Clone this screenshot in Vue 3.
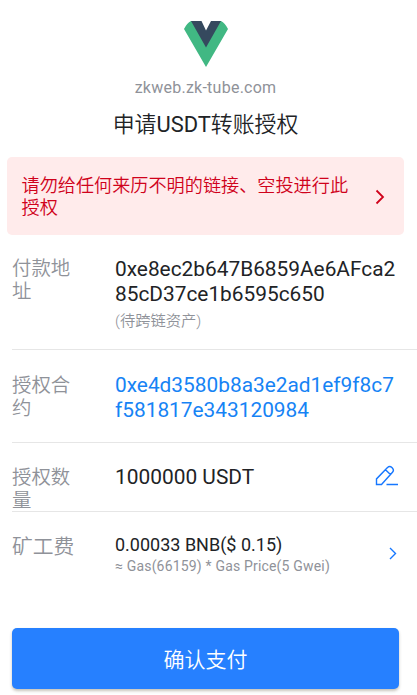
<script setup>
import { ref } from 'vue'

const domain = ref('zkweb.zk-tube.com')
const payer = ['0xe8ec2b647B6859Ae6AFca2', '85cD37ce1b6595c650']
const contract = ['0xe4d3580b8a3e2ad1ef9f8c7', 'f581817e343120984']
const amount = ref('1000000 USDT')
</script>

<template>
  <main class="approve-page">
    <header class="dapp-header">
      <svg class="dapp-logo" width="46" height="48" viewBox="0 0 46 48">
        <path fill="#41b883" d="M8 1H15L23 15L31 1H38Q42 3 45 9L23 47L1 9Q4 3 8 1Z" />
        <path fill="#35495e" d="M8 1H18.500L23 10.500L28 1H38L23 27.500Z" />
      </svg>
      <div class="domain">{{ domain }}</div>
      <h1>申请<span class="token">USDT</span>转账授权</h1>
    </header>

    <div class="warning">
      <p>请勿给任何来历不明的链接、空投进行此<br />授权</p>
      <svg class="warning-arrow" width="10" height="16" viewBox="0 0 10 16">
        <path d="M1.500 1.500L8 8L1.500 14.500" />
      </svg>
    </div>

    <section class="row row-payer">
      <div class="label">付款地<br />址</div>
      <div class="value">
        <div class="address payer"><span v-for="line in payer" :key="line">{{ line }}</span></div>
        <div class="note">(待跨链资产)</div>
      </div>
    </section>

    <section class="row row-contract">
      <div class="label">授权合<br />约</div>
      <div class="value">
        <div class="address contract"><span v-for="line in contract" :key="line">{{ line }}</span></div>
      </div>
    </section>

    <section class="row row-amount">
      <div class="label">授权数<br />量</div>
      <div class="value amount">{{ amount }}</div>
      <svg class="edit-icon" width="24" height="22" viewBox="0 0 24 22">
        <path d="M1.500 19.500V13.900L12.500 2.500Q14.700 .600 16.900 2.600L17.500 3.200Q19.300 5.200 17.500 7.200L6.500 19.500H1.500ZM10.500 4.800L15.400 9.400M11.500 19.500H23" />
      </svg>
    </section>

    <section class="row row-fee">
      <div class="label">矿工费</div>
      <div class="value">
        <div class="fee">0.00033 BNB($ 0.15)</div>
        <div class="gas">≈ Gas(66159) * Gas Price(5 Gwei)</div>
      </div>
      <svg class="fee-arrow" width="8" height="13" viewBox="0 0 8 13">
        <path d="M1 1L6.500 6.500L1 12" />
      </svg>
    </section>

    <button class="confirm" type="button">确认支付</button>
  </main>
</template>

<style>
body {
  background: #fff;
}
</style>

<style scoped>
.approve-page {
  box-sizing: border-box;
  width: 417px;
  height: 695px;
  overflow: hidden;
  font-family: Roboto, 'Noto Sans CJK SC', sans-serif;
  color: #212326;
}

/* Header */
.dapp-header {
  display: flex;
  flex-direction: column;
  align-items: center;
  height: 157px;
  padding: 20px 6px 0 0;
  box-sizing: border-box;
}
.dapp-logo {
  display: block;
}
.domain {
  margin-top: 9px;
  font-size: 16px;
  line-height: 22px;
  letter-spacing: 0.25px;
  color: #8f9299;
}
h1 {
  margin: 11px 0 0;
  font-size: 21.9px;
  font-weight: 350;
  line-height: 30px;
  white-space: nowrap;
}
.token {
  font-weight: 400;
}

/* Warning */
.warning {
  display: flex;
  align-items: center;
  justify-content: space-between;
  box-sizing: border-box;
  width: 397px;
  height: 78px;
  margin-left: 7px;
  padding: 1px 19px 0 14.5px;
  border-radius: 5px;
  background: #ffebeb;
  color: #d0021b;
}
.warning p {
  margin: 0;
  font-size: 18.15px;
  font-weight: 350;
  line-height: 21.5px;
  white-space: nowrap;
}
.warning-arrow,
.edit-icon,
.fee-arrow {
  flex: none;
  fill: none;
  stroke: #1677ff;
  stroke-width: 1.4;
}
.warning-arrow {
  stroke: #d0021b;
  stroke-width: 1.8;
}

/* Detail rows */
.row {
  display: flex;
  align-items: flex-start;
  box-sizing: border-box;
  margin-left: 12px;
  border-bottom: 1px solid #e6e6e6;
}
.row-payer {
  height: 115px;
  padding-top: 22px;
}
.row-contract {
  height: 93px;
  padding-top: 23px;
}
.row-amount {
  height: 69px;
  padding-top: 22px;
}
.row-fee {
  height: 116px;
  padding-top: 22px;
  border-bottom: none;
}
.label {
  flex: none;
  width: 103px;
  font-size: 19.4px;
  font-weight: 350;
  line-height: 23px;
  color: #8f9299;
}
.row-contract .label {
  margin-top: 1px;
}
.row-amount .label {
  margin-top: 1px;
}
.row-fee .label {
  margin-top: 2px;
  font-size: 20.8px;
}
.value {
  flex: 1;
  white-space: nowrap;
}
.address span {
  display: block;
  font-size: 20.85px;
  line-height: 25px;
}
.contract {
  color: #1683f5;
}
.note {
  margin-top: 4px;
  font-size: 15.3px;
  font-weight: 350;
  line-height: 20px;
  color: #8f9299;
}
.amount {
  font-size: 20.9px;
  line-height: 24px;
}
.edit-icon {
  margin-right: 18px;
}
.fee {
  font-size: 18px;
  line-height: 22px;
}
.gas {
  font-size: 14px;
  line-height: 20px;
  letter-spacing: 0.18px;
  color: #8f9299;
}
.fee-arrow {
  margin: 13px 20px 0 0;
}

/* Submit */
.confirm {
  display: block;
  width: 387px;
  height: 61px;
  margin: 0 0 0 12px;
  padding: 0;
  border: none;
  border-radius: 5px;
  background: #2680ff;
  box-shadow: 0 2px 3px rgba(70, 60, 30, 0.3);
  color: #fff;
  font-family: inherit;
  font-size: 21px;
  font-weight: 350;
  line-height: 64px;
}
</style>
